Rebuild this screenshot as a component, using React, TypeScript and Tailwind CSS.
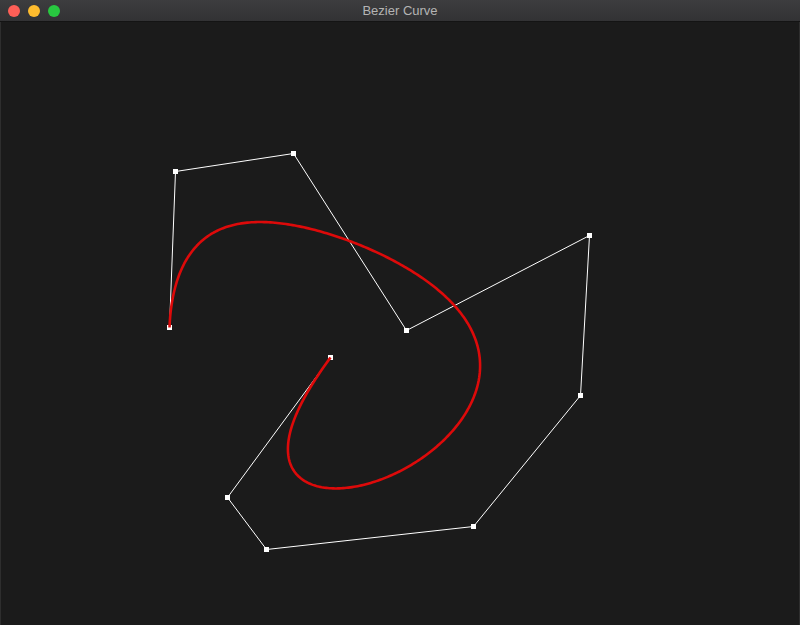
import React from 'react';

type Pt = [number, number];

// control points in window coordinates
const points: Pt[] = [
  [168.5, 327.5],
  [174.5, 171.5],
  [292.5, 153.5],
  [405.5, 330.5],
  [588.5, 235.5],
  [579.5, 395.5],
  [472.5, 526.5],
  [265.5, 549.5],
  [226.5, 497.5],
  [329.5, 357.5],
];

function casteljau(pts: Pt[], t: number): Pt {
  let cur = pts.map((p) => [p[0], p[1]] as Pt);
  while (cur.length > 1) {
    const next: Pt[] = [];
    for (let i = 0; i < cur.length - 1; i++) {
      next.push([
        cur[i][0] + (cur[i + 1][0] - cur[i][0]) * t,
        cur[i][1] + (cur[i + 1][1] - cur[i][1]) * t,
      ]);
    }
    cur = next;
  }
  return cur[0];
}

function curvePath(): string {
  const steps = 400;
  const out: string[] = [];
  for (let i = 0; i <= steps; i++) {
    const [x, y] = casteljau(points, i / steps);
    out.push(`${i === 0 ? 'M' : 'L'}${x.toFixed(2)},${y.toFixed(2)}`);
  }
  return out.join(' ');
}

function App(): JSX.Element {
  const poly = points.map((p) => p.join(',')).join(' ');

  return (
    <div className="flex flex-col w-[800px] h-[625px] bg-[#1b1b1b] overflow-hidden">
      <div className="grid grid-cols-[1fr_auto_1fr] items-center h-[22px] shrink-0 bg-gradient-to-b from-[#3d3d3f] to-[#323234] border-b border-[#141414]">
        <div className="flex items-center gap-[8px] pl-[8px]">
          <span className="w-[12px] h-[12px] rounded-full bg-[#fe5f57]" />
          <span className="w-[12px] h-[12px] rounded-full bg-[#febc2e]" />
          <span className="w-[12px] h-[12px] rounded-full bg-[#28c840]" />
        </div>
        <div
          className="text-[13px] text-[#b4b4b4] leading-none"
          style={{ fontFamily: '"Liberation Sans", "DejaVu Sans", sans-serif' }}
        >
          Bezier Curve
        </div>
        <div />
      </div>
      <div className="flex-1 border-x border-b border-[#2e2e2e]">
        <svg width="800" height="603" viewBox="0 22 800 603" className="block">
          <polyline points={poly} fill="none" stroke="#ffffff" strokeWidth={1} />
          {points.map((p, i) => (
            <rect key={i} x={p[0] - 2.5} y={p[1] - 2.5} width={5} height={5} fill="#ffffff" />
          ))}
          <path d={curvePath()} fill="none" stroke="#dd0a0a" strokeWidth={2.6} strokeLinejoin="round" />
        </svg>
      </div>
    </div>
  );
}

export default App;
